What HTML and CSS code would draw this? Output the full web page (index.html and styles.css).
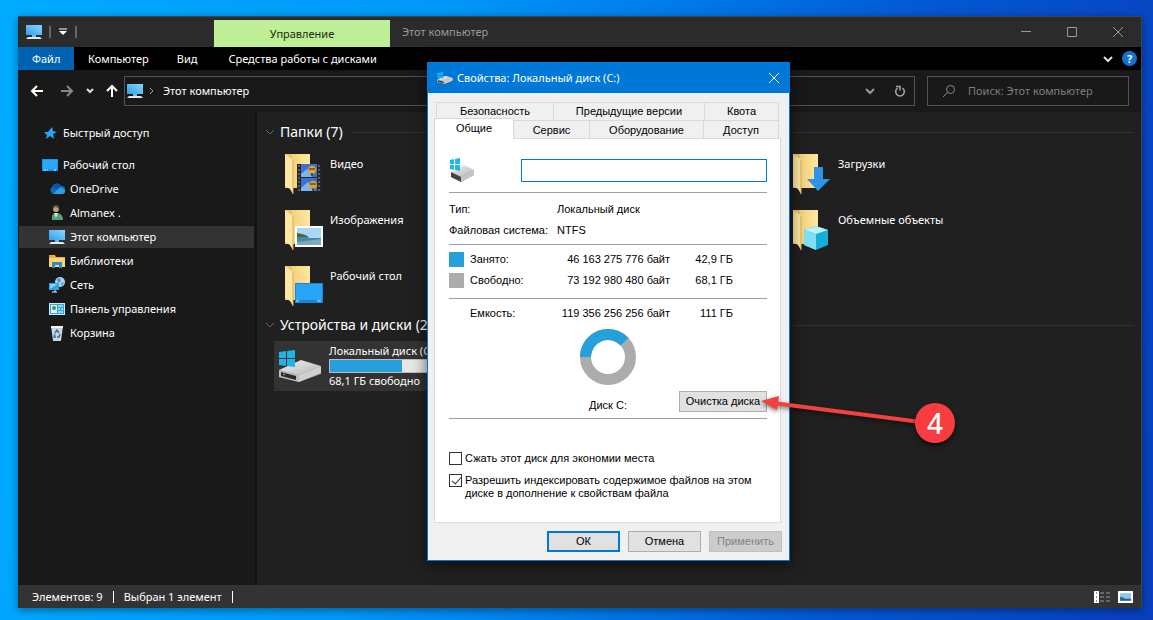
FILE: index.html
```
<!DOCTYPE html>
<html lang="ru">
<head>
	<meta charset="utf-8">
	<title>Этот компьютер</title>
	<link rel="stylesheet" href="styles.css">
</head>
<body>
	<!-- shared symbols -->
	<svg class="symbols" width="0" height="0" aria-hidden="true">
		<defs>
			<linearGradient id="screen" x1="0" y1="1" x2="1" y2="0">
				<stop offset="0" stop-color="#2da0ea"/>
				<stop offset="1" stop-color="#8ad6ff"/>
			</linearGradient>
			<linearGradient id="paper" x1="0" y1="0" x2="1" y2="0">
				<stop offset="0" stop-color="#f3d27c"/>
				<stop offset="1" stop-color="#ffe6a0"/>
			</linearGradient>
			<linearGradient id="metal" x1="0" y1="0" x2="1" y2="1">
				<stop offset="0" stop-color="#f4f4f4"/>
				<stop offset="1" stop-color="#b4b4b4"/>
			</linearGradient>
			<symbol id="pc" viewBox="0 0 16 16">
				<path d="M0 1h16v10H0z" fill="url(#screen)"/>
				<path d="M6 11h4v2H6z" fill="#7fb6d8"/>
				<path d="M2 13h12l2 2H0z" fill="#dfe9ef"/>
			</symbol>
			<symbol id="folder" viewBox="0 0 40 42">
				<path d="M2 1h25v34H2z" fill="#e9c56c"/>
				<path d="M9 1h18v34H9z" fill="url(#paper)"/>
				<path d="M2 1l8 6v34l-3-5-5-3z" fill="#ffe7a3"/>
				<path d="M10 7v34" stroke="#d7af55" fill="none"/>
			</symbol>
			<symbol id="drive" viewBox="0 0 44 34">
				<path d="M1 22L23 12l20 6v7L21 33 1 28z" fill="#8d8d8d"/>
				<path d="M1 21L23 11l20 6-22 9z" fill="url(#metal)"/>
				<path d="M1 21l20 5v7L1 28z" fill="#bdbdbd"/>
				<path d="M3 23l15 4v4L3 27z" fill="#2b2b2b"/>
				<path d="M21 26l22-9v7l-22 9z" fill="#d0d0d0"/>
				<path d="M5 25l2 1" stroke="#5fe05f"/>
				<path d="M1 3l7-1v7H1zM9 2l8-1v8H9zM1 10h7v7l-7-1zM9 10h8v8l-8-1z" fill="#1fb4e8"/>
			</symbol>
			<symbol id="drive-small" viewBox="0 0 26 24">
				<path d="M2 15L15 8l10 5v4l-13 7-10-5z" fill="#9a9a9a"/>
				<path d="M2 14L15 7l10 5-13 7z" fill="url(#metal)"/>
				<path d="M2 14l10 5v5L2 19z" fill="#4a4242"/>
				<path d="M12 19l13-7v5l-13 7z" fill="#c4c4c4"/>
				<path d="M1 2l4-1v5H1zM6 1l5-1v6H6zM1 7h4v5l-4-1zM6 7h5v6l-5-1z" fill="#1fb9e8"/>
			</symbol>
		</defs>
	</svg>

	<main class="explorer">
		<header class="titlebar">
			<div class="quick">
				<svg class="icon" viewBox="0 0 16 16"><use href="#pc"/></svg>
				<span class="bar"></span>
				<svg class="drop" viewBox="0 0 10 8"><path d="M1 1h8" stroke="#fff"/><path d="M1 3h8L5 7z" fill="#fff"/></svg>
				<span class="bar"></span>
			</div>
			<div class="context-tab">Управление</div>
			<h1>Этот компьютер</h1>
			<div class="window-buttons">
				<button aria-label="Свернуть"><svg viewBox="0 0 12 12"><path d="M1 5.500h10"/></svg></button>
				<button aria-label="Развернуть"><svg viewBox="0 0 12 12"><path d="M1.500 1.500h9v9h-9z"/></svg></button>
				<button aria-label="Закрыть"><svg viewBox="0 0 12 12"><path d="M1 1l10 10M11 1L1 11"/></svg></button>
			</div>
		</header>

		<nav class="ribbon">
			<a class="file" href="#">Файл</a>
			<a href="#">Компьютер</a>
			<a href="#">Вид</a>
			<a class="tools" href="#">Средства работы с дисками</a>
			<div class="ribbon-end">
				<button aria-label="Развернуть ленту"><svg viewBox="0 0 12 12"><path d="M2 4l4 4 4-4" fill="none" stroke="#ddd" stroke-width="2"/></svg></button>
				<button class="help" aria-label="Справка">?</button>
			</div>
		</nav>

		<div class="navigation">
			<div class="arrows">
				<button aria-label="Назад"><svg viewBox="0 0 14 12"><path d="M13 6H2M7 1L2 6l5 5" stroke="#fff"/></svg></button>
				<button aria-label="Вперед"><svg viewBox="0 0 14 12"><path d="M1 6h11M7 1l5 5-5 5" stroke="#888"/></svg></button>
				<button class="recent" aria-label="Последние"><svg viewBox="0 0 8 8"><path d="M1 2l3 3 3-3" stroke="#ddd"/></svg></button>
				<button class="up" aria-label="Вверх"><svg viewBox="0 0 12 14"><path d="M6 13V2M1 7l5-5 5 5" stroke="#fff"/></svg></button>
			</div>
			<div class="address">
				<svg class="icon" viewBox="0 0 16 16"><use href="#pc"/></svg>
				<svg class="crumb" viewBox="0 0 6 8"><path d="M1 1l3 3-3 3" fill="none" stroke="#999"/></svg>
				<a href="#">Этот компьютер</a>
				<button aria-label="История"><svg viewBox="0 0 12 12"><path d="M2 4l4 4 4-4" fill="none" stroke="#999" stroke-width="2"/></svg></button>
				<button aria-label="Обновить"><svg viewBox="0 0 12 12"><path d="M8.500 3.200a4.300 4.300 0 1 1-5 0" fill="none" stroke="#a8a8a8" stroke-width="1.500"/><path d="M2 1.500h4v4" fill="none" stroke="#a8a8a8" stroke-width="1.500"/></svg></button>
			</div>
			<label class="search">
				<svg viewBox="0 0 14 14"><circle cx="8.500" cy="5.500" r="4" fill="none" stroke="#888"/><path d="M5.500 8.500L1 13" stroke="#888"/></svg>
				<input type="text" placeholder="Поиск: Этот компьютер" aria-label="Поиск">
			</label>
		</div>

		<div class="content">
			<nav class="sidebar">
				<a class="top quick-access" href="#"><svg class="icon" viewBox="0 0 16 16"><path d="M10 2l1 4 4 1-4 2 1 5-4-3-4 3 1-4-3-3h4z" fill="#2aa4f4"/></svg>Быстрый доступ</a>
				<a class="top" href="#"><svg class="icon" viewBox="0 0 16 16"><path d="M0 2h16v12H0z" fill="#1a96ec"/><path d="M1 3h14v9H1z" fill="#2aa7f8"/><path d="M2 13h2m1 0h1m6 0h2" stroke="#d8f0ff"/></svg>Рабочий стол</a>
				<a href="#"><svg class="icon" viewBox="0 0 16 16"><path d="M4 13a4 4 0 0 1-1-7 5 5 0 0 1 9-1 4 4 0 0 1 1 8z" fill="#0f6cbd"/><path d="M3 6a5 5 0 0 1 9-1L9 9z" fill="#0858a5"/><path d="M4 13l5-5a4 4 0 0 1 7 3q-1 2-3 2z" fill="#2b9de9"/></svg>OneDrive</a>
				<a href="#"><svg class="icon" viewBox="0 0 16 16"><path d="M3 15q-1-7 4-7 7 0 7 7z" fill="#5c9f7c"/><path d="M5 8l2 5 2-5z" fill="#dce8dc"/><circle cx="7" cy="4" r="3" fill="#c79e78"/><path d="M4 4q0-4 3-4 4 0 3 5-1-3-4-3z" fill="#5d5443"/></svg>Almanex .</a>
				<a class="selected" href="#"><svg class="icon" viewBox="0 0 16 16"><use href="#pc"/></svg>Этот компьютер</a>
				<a href="#"><svg class="icon" viewBox="0 0 16 16"><path d="M0 2h6l1 2h9v10H0z" fill="#e8a93b"/><path d="M0 5h16v9H0z" fill="#ffd56b"/><path d="M3 15V9h10v6h-3v-3H6v3z" fill="#2d8cc9"/></svg>Библиотеки</a>
				<a href="#"><svg class="icon" viewBox="0 0 16 16"><circle cx="11" cy="5" r="5" fill="#a9d7ef"/><path d="M8 2l3-1 1 3-3 2zM12 6l3-1-2 4z" fill="#4d95c2"/><path d="M0 6h10v7H0z" fill="#2da0ea"/><path d="M1 7h8l-8 5z" fill="#81d1ff"/><path d="M3 15h5M6 13v2" stroke="#dfe9ef"/></svg>Сеть</a>
				<a href="#"><svg class="icon" viewBox="0 0 16 16"><path d="M0 2h16v12H0z" fill="#c8e9fa"/><path d="M1 3h14v10H1z" fill="#35a3dc"/><path d="M2 4h6v8H2z" fill="#dff4ff"/><circle cx="5" cy="7" r="2" fill="#3c9a55"/><path d="M9 5h5M9 8h2m1 0h2M9 11h5" stroke="#fff"/></svg>Панель управления</a>
				<a href="#"><svg class="icon" viewBox="0 0 16 16"><path d="M2 1h12l-2 15H4z" fill="#cfd4d8"/><path d="M2 1h12v2H2z" fill="#f3f5f6"/><path d="M6 8l2-3 2 3M11 9l-1 3H8M7 12H5l1-3" stroke="#2b7bc0" stroke-width="1.500" fill="none"/></svg>Корзина</a>
			</nav>

			<section class="files">
				<h2 class="group"><svg viewBox="0 0 10 8"><path d="M1 2l4 4 4-4"/></svg>Папки (7)</h2>
				<div class="tiles">
					<a class="tile" href="#">
						<svg viewBox="0 0 40 42"><use href="#folder"/><path d="M14 11h24v27H14z" fill="#262626"/><path d="M18 11h16v13H18zM18 25h16v13H18z" fill="#3e70cf"/><path d="M18 21l6-5 5 8H18zM18 35l7-6 5 9H18z" fill="#7ab7ea"/><circle cx="29" cy="17" r="4" fill="#e6a52b"/><circle cx="30" cy="32" r="4" fill="#d8a52c"/><path d="M26 16h6M27 31h6M29 20v3M30 35v3" stroke="#222"/><path d="M16 12v26M36 12v26" stroke="#999" stroke-dasharray="2 2"/></svg>
						<span>Видео</span>
					</a>
					<a class="tile third" href="#">
						<svg viewBox="0 0 40 42"><use href="#folder"/><path d="M23 14h9v12h7L27 38 16 26h7z" fill="#2d92e8"/></svg>
						<span>Загрузки</span>
					</a>
					<a class="tile" href="#">
						<svg viewBox="0 0 40 42"><use href="#folder"/><path d="M12 17h28v21H12z" fill="#fff"/><path d="M14 19h24v17H14z" fill="#a9d7f4"/><path d="M14 25q10 1 12 4l12 0v7H14z" fill="#4a86a8"/><path d="M14 24q8 1 12 4H14z" fill="#46683f"/><path d="M14 33l24-3v6H14z" fill="#7aa9c0"/></svg>
						<span>Изображения</span>
					</a>
					<a class="tile third" href="#">
						<svg viewBox="0 0 40 42"><use href="#folder"/><path d="M13 21l12-4 12 4v15l-12 5-12-5z" fill="#18acd8"/><path d="M13 21l12-4 12 4-12 4z" fill="#b9f2fb"/><path d="M13 21l12 4v16l-12-5z" fill="#7de0f2"/></svg>
						<span>Объемные объекты</span>
					</a>
					<a class="tile" href="#">
						<svg viewBox="0 0 40 42"><use href="#folder"/><path d="M12 18h28v20H12z" fill="#1686da"/><path d="M13 19h26v16H13z" fill="#28a5f6"/><path d="M13 36h3m18 0h4" stroke="#c8ebff"/></svg>
						<span>Рабочий стол</span>
					</a>
				</div>
				<h2 class="group"><svg viewBox="0 0 10 8"><path d="M1 2l4 4 4-4"/></svg>Устройства и диски (2)</h2>
				<a class="disk" href="#">
					<svg viewBox="0 0 44 34"><use href="#drive"/></svg>
					<span class="disk-info">
						<span>Локальный диск (C:)</span>
						<span class="meter"><span class="meter-used" style="width: 39%"></span></span>
						<span>68,1 ГБ свободно</span>
					</span>
				</a>
			</section>
		</div>

		<footer class="status">
			<span>Элементов: 9</span>
			<span>Выбран 1 элемент</span>
			<div class="views">
				<button aria-label="Таблица"><svg viewBox="0 0 16 12"><path d="M0 0h5v12H0z" fill="#fff"/><path d="M2 2h1M2 6h1M2 10h1" stroke="#222"/><path d="M6 2h4m2 0h4M6 6h4m2 0h4M6 10h4m2 0h4" stroke="#999"/></svg></button>
				<button aria-label="Крупные значки"><svg viewBox="0 0 14 11"><path d="M0 0h14v11H0z" fill="#fff"/><path d="M2 2h10v7H2z" fill="#8cc4ea"/><path d="M2 5l5 2h5v2H2z" fill="#2b6086"/></svg></button>
			</div>
		</footer>
	</main>

	<form class="dialog" role="dialog" aria-labelledby="dialog-title">
		<header class="dialog-title">
			<svg viewBox="0 0 44 34"><use href="#drive"/></svg>
			<h2 id="dialog-title">Свойства: Локальный диск (C:)</h2>
			<button type="button" aria-label="Закрыть"><svg viewBox="0 0 12 12"><path d="M1 1l10 10M11 1L1 11" stroke="#fff"/></svg></button>
		</header>
		<div class="dialog-body">
			<div class="tabs back">
				<button type="button">Безопасность</button>
				<button type="button">Предыдущие версии</button>
				<button type="button">Квота</button>
			</div>
			<div class="tabs front">
				<button type="button" class="active">Общие</button>
				<button type="button">Сервис</button>
				<button type="button">Оборудование</button>
				<button type="button">Доступ</button>
			</div>
			<div class="panel">
				<div class="name-row">
					<svg viewBox="0 0 26 24"><use href="#drive-small"/></svg>
					<input type="text" aria-label="Метка тома" autofocus>
				</div>
				<dl class="facts">
					<dt>Тип:</dt><dd>Локальный диск</dd>
					<dt>Файловая система:</dt><dd>NTFS</dd>
				</dl>
				<table class="usage">
					<tr><td><span class="swatch used"></span></td><th>Занято:</th><td>46 163 275 776 байт</td><td>42,9 ГБ</td></tr>
					<tr><td><span class="swatch free"></span></td><th>Свободно:</th><td>73 192 980 480 байт</td><td>68,1 ГБ</td></tr>
				</table>
				<table class="usage">
					<tr><td></td><th>Емкость:</th><td>119 356 256 256 байт</td><td>111 ГБ</td></tr>
				</table>
				<div class="chart">
					<svg class="donut" viewBox="0 0 56 56">
						<circle cx="28" cy="28" r="22.500" fill="none" stroke="#acacac" stroke-width="11"/>
						<path d="M5.500 28A22.500 22.500 0 0 1 44.500 12.700" fill="none" stroke="#26a0da" stroke-width="11"/>
					</svg>
					<span class="disk-name">Диск C:</span>
					<button type="button" class="cleanup">Очистка диска</button>
				</div>
				<div class="options">
					<label><input type="checkbox">Сжать этот диск для экономии места</label>
					<label><input type="checkbox" checked><span>Разрешить индексировать содержимое файлов на этом диске в дополнение к свойствам файла</span></label>
				</div>
			</div>
			<div class="actions">
				<button type="button" class="default">ОК</button>
				<button type="button">Отмена</button>
				<button type="button" disabled>Применить</button>
			</div>
		</div>
	</form>

	<!-- step callout -->
	<div class="callout">
		<svg viewBox="0 0 194 64"><path d="M12 11L160 30" stroke="#f4403f" stroke-width="4"/><path d="M0 9L18 4l-2 14z" fill="#f4403f"/></svg>
		<span>4</span>
	</div>
</body>
</html>
```
FILE: styles.css
```
* {
	box-sizing: border-box;
}

body {
	margin: 0;
	height: 100vh;
	padding: 16px 11px 12px 18px;
	overflow: hidden;
	position: relative;
	font: 11px/16px "Noto Sans", "Open Sans", sans-serif;
	color: #fff;
	background: linear-gradient(100deg, #00acff 0%, #0098f8 35%, #0078e8 55%, #0456d0 75%, #083fbd 100%);
}

button,
input {
	font: inherit;
	color: inherit;
	margin: 0;
}

button {
	padding: 0;
	border: 0;
	background: none;
}

a {
	color: inherit;
	text-decoration: none;
}

h1,
h2 {
	margin: 0;
	font-size: 11px;
	font-weight: normal;
}

svg {
	display: block;
	flex: none;
}

.symbols {
	position: absolute;
}

.icon {
	width: 16px;
	height: 16px;
}

/* explorer window */
.explorer {
	height: 100%;
	display: flex;
	flex-direction: column;
	border: 1px solid #3c4650;
	border-left: 0;
	border-bottom: 0;
	background: #191919;
	box-shadow: 0 2px 8px rgba(0, 0, 0, 0.4);
}

.titlebar {
	display: flex;
	height: 30px;
	background: #2b2b2b;
}

.quick {
	display: flex;
	align-items: center;
	gap: 7px;
	width: 196px;
	padding-left: 8px;
}

.bar {
	width: 2px;
	height: 12px;
	background: #666;
}

.drop {
	width: 10px;
	height: 8px;
}

.context-tab {
	width: 176px;
	margin-top: 3px;
	line-height: 28px;
	text-align: center;
	color: #1b2b10;
	background: #bfef96;
}

.titlebar h1 {
	flex: 1;
	padding-left: 12px;
	line-height: 30px;
	color: #999;
}

.window-buttons {
	display: flex;
}

.window-buttons button {
	width: 46px;
	display: flex;
	align-items: center;
	justify-content: center;
}

.window-buttons svg {
	width: 12px;
	height: 12px;
	fill: none;
	stroke: #999;
}

.ribbon {
	display: flex;
	height: 23px;
	line-height: 24px;
	background: #000;
}

.ribbon a {
	padding: 0 14px;
}

.ribbon .file {
	width: 56px;
	background: #0063b1;
}

.ribbon .tools {
	margin-left: 3px;
}

.ribbon-end {
	display: flex;
	align-items: center;
	gap: 8px;
	margin-left: auto;
	padding-right: 4px;
}

.ribbon-end svg {
	width: 12px;
	height: 12px;
}

.help {
	width: 15px;
	height: 15px;
	border-radius: 50%;
	line-height: 15px;
	font-weight: bold;
	background: #1173d0;
}

.navigation {
	display: flex;
	align-items: center;
	height: 42px;
	padding-right: 12px;
}

.arrows {
	display: flex;
	align-items: center;
	width: 106px;
	padding-left: 12px;
	gap: 16px;
}

.arrows button {
	width: 14px;
}

.arrows .recent {
	width: 8px;
	margin: 0 -4px;
}

.arrows .up {
	width: 12px;
}

.arrows svg {
	width: 100%;
	height: 14px;
	fill: none;
	stroke-width: 2;
}

.address {
	flex: 1;
	display: flex;
	align-items: center;
	height: 30px;
	padding: 0 8px 0 2px;
	border: 1px solid #535353;
}

.crumb {
	width: 6px;
	height: 8px;
	margin: 0 8px 0 6px;
}

.address a {
	margin-right: auto;
}

.address button {
	margin-left: 18px;
}

.address button svg {
	width: 12px;
	height: 12px;
}

.search {
	display: flex;
	align-items: center;
	gap: 12px;
	width: 202px;
	height: 30px;
	margin-left: 12px;
	padding-left: 14px;
	border: 1px solid #535353;
}

.search svg {
	width: 14px;
	height: 14px;
}

.search input {
	width: 100%;
	min-width: 0;
	padding: 0;
	border: 0;
	background: none;
}

.search input::placeholder {
	color: #7e7e7e;
}

.content {
	flex: 1;
	display: flex;
	min-height: 0;
}

.sidebar {
	width: 239px;
	padding: 10px 1px 0;
	border-right: 2px solid #111;
}

.sidebar a {
	display: flex;
	align-items: center;
	gap: 5px;
	height: 22px;
	margin-bottom: 2px;
	padding-left: 30px;
}

.sidebar .top {
	padding-left: 23px;
}

.sidebar .quick-access {
	margin-bottom: 10px;
}

.sidebar .selected {
	background: #333;
}

.files {
	flex: 1;
	min-width: 0;
	padding: 10px 7px 0 8px;
	background: #202020;
}

.group {
	display: flex;
	align-items: center;
	font-size: 14px;
	line-height: 20px;
}

.group::after {
	content: "";
	flex: 1;
	height: 1px;
	margin-left: 8px;
	background: #303030;
}

.group svg {
	width: 10px;
	height: 8px;
	margin-right: 5px;
	fill: none;
	stroke: #666;
}

.tiles {
	display: grid;
	grid-template-columns: 254px 254px 254px;
	row-gap: 14px;
	padding: 11px 0 8px 18px;
}

.tile {
	grid-column: 1;
	display: flex;
	gap: 7px;
}

.third {
	grid-column: 3;
}

.tile svg {
	width: 40px;
	height: 42px;
}

.tile span {
	padding-top: 3px;
}

.disk {
	display: flex;
	align-items: center;
	gap: 7px;
	width: 252px;
	height: 50px;
	margin: 6px 0 0 9px;
	padding-left: 4px;
	background: #333;
}

.disk > svg {
	width: 44px;
	height: 34px;
}

.disk-info {
	flex: 1;
	padding-right: 10px;
}

.disk-info span {
	display: block;
}

.disk-info .meter {
	height: 14px;
	border: 1px solid #bcbcbc;
	background: #e6e6e6;
}

.disk-info .meter-used {
	height: 100%;
	background: #26a0da;
}

.status {
	display: flex;
	align-items: center;
	height: 23px;
	padding-left: 14px;
	background: #333;
}

.status span {
	padding-right: 10px;
	margin-right: 10px;
	border-right: 1px solid #fff;
	line-height: 12px;
}

.views {
	display: flex;
	align-items: center;
	gap: 8px;
	margin-left: auto;
	padding-right: 8px;
}

.views svg {
	height: 12px;
}

/* disk properties */
.dialog {
	position: absolute;
	left: 427px;
	top: 62px;
	width: 363px;
	border: 1px solid #0078d7;
	font: 11px/13px "Liberation Sans", Arial, sans-serif;
	color: #000;
	background: #f0f0f0;
	box-shadow: 0 3px 14px rgba(0, 0, 0, 0.6);
}

.dialog-title {
	display: flex;
	align-items: center;
	height: 30px;
	padding: 0 9px;
	font: 11px/16px "Noto Sans", "Open Sans", sans-serif;
	color: #fff;
	background: #0078d7;
}

.dialog-title > svg {
	width: 16px;
	height: 14px;
}

.dialog-title h2 {
	flex: 1;
	padding-left: 4px;
}

.dialog-title button svg {
	width: 12px;
	height: 12px;
}

.dialog-body {
	padding: 9px 6px 8px;
}

.tabs {
	display: grid;
	height: 18px;
}

.tabs button {
	border: 1px solid #d9d9d9;
	border-width: 1px 1px 0 0;
}

.back {
	grid-template-columns: 118px 151px 74px;
	padding-left: 2px;
}

.back button:first-child {
	border-left-width: 1px;
}

.front {
	grid-template-columns: 80px 76px 114px 75px;
}

.tabs .active {
	height: 21px;
	margin-top: -2px;
	padding-bottom: 2px;
	border-width: 1px;
	border-bottom: 0;
	background: #fff;
	z-index: 1;
}

.panel {
	padding: 19px 13px 22px 14px;
	margin-right: 2px;
	border: 1px solid #dcdcdc;
	background: #fff;
}

.name-row {
	display: flex;
	align-items: center;
	justify-content: space-between;
	padding-bottom: 10px;
}

.name-row svg {
	width: 26px;
	height: 24px;
}

.name-row input {
	width: 246px;
	height: 23px;
	padding: 0 3px;
	border: 1px solid #0078d7;
	outline: 0;
	background: #fff;
}

.facts {
	display: grid;
	grid-template-columns: 108px 1fr;
	gap: 8px 0;
	margin: 0;
	padding: 10px 0 7px;
	border-top: 1px solid #a0a0a0;
	white-space: nowrap;
}

.facts dd {
	margin: 0;
}

.usage {
	width: 100%;
	border-top: 1px solid #a0a0a0;
	border-spacing: 0;
	table-layout: fixed;
}

.usage td,
.usage th {
	height: 21px;
	padding: 0;
	font-weight: normal;
	text-align: left;
}

.usage tr > :first-child {
	width: 21px;
}

.usage tr > :nth-child(2) {
	width: 80px;
}

.usage tr > :nth-child(3) {
	width: 120px;
	text-align: right;
}

.usage tr > :nth-child(4) {
	padding-right: 34px;
	text-align: right;
}

.usage tr:first-child > * {
	height: 25px;
	padding-top: 4px;
}

.usage + .usage {
	margin-top: 7px;
}

.swatch {
	display: block;
	width: 15px;
	height: 15px;
}

.used {
	background: #26a0da;
}

.free {
	background: #acacac;
}

.chart {
	display: grid;
	grid-template-columns: 1fr auto 1fr;
	align-items: end;
	padding: 5px 0 6px;
	border-bottom: 1px solid #a0a0a0;
}

.donut {
	grid-column: 2;
	width: 56px;
	height: 56px;
	margin-bottom: 6px;
}

.disk-name {
	grid-column: 2;
	grid-row: 2;
	text-align: center;
}

.cleanup {
	grid-column: 3;
	grid-row: 2;
	justify-self: end;
	width: 88px;
}

.cleanup,
.actions button {
	height: 21px;
	border: 1px solid #adadad;
	background: #e1e1e1;
}

.options {
	padding-top: 33px;
}

.options label {
	display: flex;
	gap: 3px;
	margin-bottom: 9px;
}

.options label:last-child {
	margin-bottom: 0;
}

.options input {
	flex: none;
	appearance: none;
	width: 13px;
	height: 13px;
	border: 1px solid #333;
	background: #fff;
}

.options input:checked::before {
	content: "";
	display: block;
	width: 4px;
	height: 8px;
	margin-left: 4px;
	border: solid #333;
	border-width: 0 1px 1px 0;
	transform: rotate(42deg);
}

.actions {
	display: flex;
	justify-content: flex-end;
	gap: 8px;
	padding: 8px 1px 0 0;
}

.actions button {
	width: 73px;
}

.actions .default {
	border: 2px solid #0078d7;
}

.actions button:disabled {
	border-color: #bfbfbf;
	color: #838383;
	background: #ccc;
}

/* callout lies over both windows */
.callout {
	position: absolute;
	left: 761px;
	top: 392px;
}

.callout svg {
	width: 194px;
	height: 64px;
	filter: drop-shadow(0 2px 2px rgba(0, 0, 0, 0.5));
}

.callout span {
	position: absolute;
	right: 0;
	top: 11px;
	width: 40px;
	height: 40px;
	border-radius: 50%;
	font-size: 28px;
	font-weight: 500;
	line-height: 40px;
	text-align: center;
	background: #f93c3f;
	box-shadow: 0 3px 5px rgba(0, 0, 0, 0.6);
}
```
